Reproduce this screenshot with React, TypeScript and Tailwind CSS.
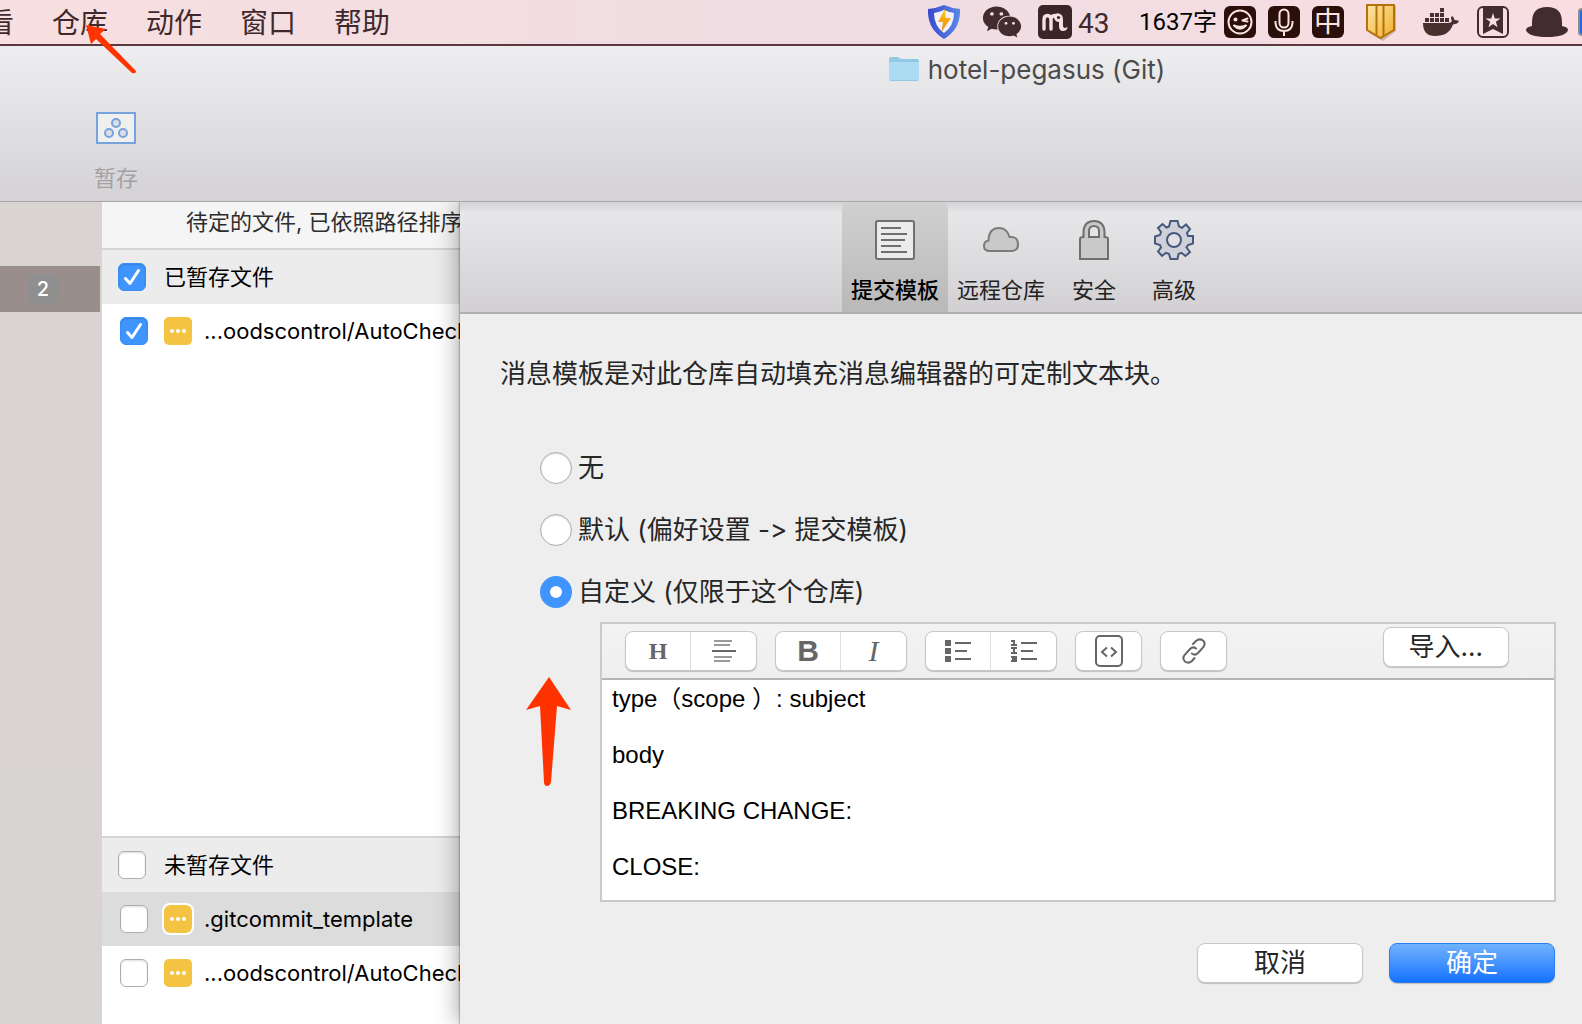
import React, { useId, useState } from "react";
import { FaWeixin } from "react-icons/fa";

const menuItems = ["看", "仓库", "动作", "窗口", "帮助"];

const initialTemplate = "type（scope ）: subject\n\nbody\n\nBREAKING CHANGE:\n\nCLOSE:";

function ShieldIcon() {
  return (
    <svg width="32" height="34" viewBox="0 0 32 34" aria-hidden="true">
      <defs>
        <linearGradient id="shield" x1="0" x2="1">
          <stop offset="0" stopColor="#3a49cf" />
          <stop offset="1" stopColor="#5b8ae4" />
        </linearGradient>
        <linearGradient id="bolt" x1="0" x2="0" y1="0" y2="1">
          <stop offset="0" stopColor="#ffc60a" />
          <stop offset="1" stopColor="#ee8a12" />
        </linearGradient>
      </defs>
      <path d="M0 4Q9 3 16 0Q23 3 32 4Q33 24 16 34Q-1 24 0 4Z" fill="url(#shield)" />
      <path d="M6 8Q12 7 16 5Q20 7 26 8Q26 21 16 28Q6 21 6 8Z" fill="#f5f1fb" />
      <path d="M17 4L10 17H15L13.500 27L23 13H17.500Z" fill="url(#bolt)" />
    </svg>
  );
}

function MIcon() {
  return (
    <svg width="34" height="34" viewBox="0 0 34 34" aria-hidden="true">
      <rect width="34" height="34" rx="5" fill="#3a2628" />
      <path
        d="M6 24V15Q6 10.500 9.500 10.500Q13 10.500 13 15V24M13 15Q13 10.500 17 10.500"
        fill="none"
        stroke="#f6e0e2"
        strokeWidth="3.400"
        strokeLinecap="round"
      />
      <path
        d="M15 11Q18 7 22 9Q25 10 25 15V21Q25 23 27 23Q28.500 23 29 21.500Q30 22 29 24Q28 26 25 26Q21 26 21 21V17Q18 17 17 15Z"
        fill="#f6e0e2"
      />
      <circle cx="20.500" cy="12.500" r="1.600" fill="#3a2628" />
    </svg>
  );
}

function SmileIcon() {
  return (
    <svg width="32" height="32" viewBox="0 0 32 32" aria-hidden="true" fill="none" stroke="#fbe4df" strokeWidth="2">
      <rect width="32" height="32" rx="6" fill="#2a0f0a" stroke="none" />
      <circle cx="16" cy="16" r="11.500" />
      <path d="M23.500 12.500L18.500 14.500L23.500 15.500M10 19.500Q16 26 22 19.500Q16 22 10 19.500Z" strokeLinecap="round" strokeLinejoin="round" />
      <circle cx="11.500" cy="13.500" r="2" fill="#fbe4df" stroke="none" />
    </svg>
  );
}

function MicIcon() {
  return (
    <svg width="32" height="32" viewBox="0 0 32 32" aria-hidden="true" fill="none" stroke="#fbe4df" strokeWidth="2">
      <rect width="32" height="32" rx="6" fill="#2a0f0a" stroke="none" />
      <rect x="11.500" y="3.500" width="9" height="18" rx="4.500" />
      <path d="M7.500 15V17Q8 25 16 25Q24 25 24.500 17V15M16 25V30" />
    </svg>
  );
}

function GoldIcon() {
  return (
    <svg width="32" height="37" viewBox="0 0 32 37" aria-hidden="true">
      <defs>
        <linearGradient id="gold" x1="0" x2="1" y1="0" y2="1">
          <stop offset="0" stopColor="#ffe6a6" />
          <stop offset="1" stopColor="#eeb02c" />
        </linearGradient>
      </defs>
      <path d="M2 2H30V27L17 37L3 29Z" fill="#a9877e" opacity="0.5" />
      <path d="M1 1H28V26L14.500 34L1 26Z" fill="url(#gold)" stroke="#b5720b" strokeWidth="2" />
      <path d="M10.500 1V31M17.500 1V32" stroke="#b5720b" strokeWidth="2" />
    </svg>
  );
}

function DockerIcon() {
  return (
    <svg width="36" height="28" viewBox="0 0 36 28" aria-hidden="true" fill="#49302f">
      <path d="M0 15H25Q28 15 29 13Q27 10 29 8Q31 9 31.500 12Q34 12 36 13Q35 16 30 16.500Q26 28 12 28Q0 28 0 15Z" />
      <path d="M2 10H6V14H2ZM7 10H11V14H7ZM12 10H16V14H12ZM17 10H21V14H17ZM22 10H26V14H22ZM7 5H11V9H7ZM12 5H16V9H12ZM17 5H21V9H17ZM17 0H21V4H17Z" />
    </svg>
  );
}

function BookmarkIcon() {
  return (
    <svg width="32" height="32" viewBox="0 0 32 32" aria-hidden="true">
      <rect x="1" y="1" width="30" height="30" rx="5" fill="none" stroke="#422c31" strokeWidth="2" />
      <path d="M6 1H26V28L16 23L6 28Z" fill="#422c31" />
      <path d="M16 7L17.800 12.400H23.500L18.900 15.800L20.600 21.200L16 17.900L11.400 21.200L13.100 15.800L8.500 12.400H14.200Z" fill="#fbdedf" />
    </svg>
  );
}

function HatIcon() {
  return (
    <svg width="42" height="30" viewBox="0 0 42 30" aria-hidden="true" fill="#422c31">
      <path d="M6 19V15Q6 0 21 0Q36 0 36 15V19Q42 20 42 23Q40 30 21 30Q2 30 0 23Q0 20 6 19Z" />
    </svg>
  );
}

function MenuBar() {
  return (
    <header className="flex h-[46px] shrink-0 items-center justify-between overflow-hidden border-b-2 border-[#5a3a40] bg-linear-to-r from-[#f8dfe0] via-[#eedde3] via-55% to-[#f9dde1] text-[28px] leading-8 text-[#3f292d]">
      <nav className="-ml-3.5 flex shrink-0 gap-[38px] pt-px whitespace-nowrap">
        {menuItems.map((item) => (
          <button key={item} type="button">
            {item}
          </button>
        ))}
      </nav>
      <div className="flex shrink-0 items-center whitespace-nowrap">
        <ShieldIcon />
        <FaWeixin className="ml-[22px]" size={40} color="#432c30" />
        <span className="ml-4">
          <MIcon />
        </span>
        <span className="ml-1.5 w-[61px] pt-1 font-[Roboto]">43</span>
        <span className="w-[85px] font-[Roboto,'Noto_Sans_CJK_SC'] text-2xl text-black">1637字</span>
        <div className="flex gap-3">
          <SmileIcon />
          <MicIcon />
          <span className="flex size-8 items-center justify-center rounded-md bg-[#2a0f0a] text-[28px] text-[#fbe4df]">中</span>
        </div>
        <span className="ml-[22px]">
          <GoldIcon />
        </span>
        <span className="ml-[25px]">
          <DockerIcon />
        </span>
        <span className="ml-[18px]">
          <BookmarkIcon />
        </span>
        <span className="ml-[17px]">
          <HatIcon />
        </span>
        <span className="ml-2.5 h-7 w-1 rounded-l-md border-2 border-r-0 border-[#8d8a94] bg-[#1a6fd8]" />
      </div>
    </header>
  );
}

function WindowToolbar() {
  return (
    <div className="h-[156px] shrink-0 border-b border-[#a9a6aa] bg-linear-to-b from-[#eeedef] to-[#d4d2d5]">
      <div className="flex h-[46px] items-center justify-center gap-2 pl-[470px] text-[#4b4b4b]">
        <svg width="33" height="26" viewBox="0 0 33 26" aria-hidden="true">
          <path d="M2 3Q2 1 4 1H11L14 3H30Q32 3 32 5V23Q32 25 30 25H4Q2 25 2 23Z" fill="#8fc9e2" />
          <path d="M2 6H32V22Q32 24 30 24H4Q2 24 2 22Z" fill="#abdcf3" />
        </svg>
        <h1 className="text-[26px]">hotel-pegasus (Git)</h1>
      </div>
      <button type="button" className="ml-[86px] flex w-[60px] flex-col items-center gap-[18px] pt-5 text-[22px] leading-8 text-[#a3a2a3]">
        <svg width="40" height="32" viewBox="0 0 40 32" aria-hidden="true" fill="none" stroke="#75a3de" strokeWidth="2">
          <rect x="1" y="1" width="38" height="30" fill="#efeff0" />
          <circle cx="20" cy="11" r="4" fill="#dedee2" />
          <circle cx="13" cy="21" r="4" fill="#dedee2" />
          <circle cx="27" cy="21" r="4" fill="#dedee2" />
        </svg>
        暂存
      </button>
    </div>
  );
}

function Checkbox({ checked, children }: { checked: boolean; children: React.ReactNode }) {
  const [on, setOn] = useState(checked);
  return (
    <label className="flex items-center whitespace-nowrap">
      <span className="relative flex size-7 shrink-0">
        <input
          type="checkbox"
          checked={on}
          onChange={() => setOn(!on)}
          className="peer size-7 appearance-none rounded-md border border-[#aeaeae] bg-white shadow-[inset_0_1px_2px_#0002] checked:border-[#3b8ef5] checked:bg-[#3f95fd]"
        />
        <svg viewBox="0 0 28 28" aria-hidden="true" className="pointer-events-none absolute inset-0 hidden peer-checked:block">
          <path d="M7.500 15.500L12 20.500L20.500 7.500" fill="none" stroke="white" strokeWidth="3" strokeLinecap="round" strokeLinejoin="round" />
        </svg>
      </span>
      {children}
    </label>
  );
}

function GroupRow({ title, checked }: { title: string; checked: boolean }) {
  return (
    <div className="flex h-[54px] shrink-0 items-center bg-[#ececec] pl-4">
      <Checkbox checked={checked}>
        <span className="pl-[18px]">{title}</span>
      </Checkbox>
    </div>
  );
}

function FileRow({ name, checked, selected }: { name: string; checked: boolean; selected?: boolean }) {
  return (
    <div className={selected ? "flex h-[54px] items-center bg-[#dcdcdc] pl-[18px]" : "flex h-[54px] items-center pl-[18px]"}>
      <Checkbox checked={checked}>
        <svg
          width="28"
          height="28"
          viewBox="0 0 28 28"
          aria-hidden="true"
          className={selected ? "mr-3 ml-4 rounded-md outline-2 outline-white" : "mr-3 ml-4"}
        >
          <rect width="28" height="28" rx="5" fill="#f5c342" />
          <circle cx="8" cy="14" r="2" fill="white" />
          <circle cx="14" cy="14" r="2" fill="white" />
          <circle cx="20" cy="14" r="2" fill="white" />
        </svg>
        <span>{name}</span>
      </Checkbox>
    </div>
  );
}

function FileList() {
  return (
    <section className="flex w-[358px] shrink-0 flex-col overflow-hidden bg-white text-[22px] leading-7 text-black">
      <h2 className="h-12 shrink-0 border-b-2 border-[#d4d4d4] bg-[#f5f5f5] pt-1.5 pl-[84px] whitespace-nowrap text-[#2d2d2d]">
        待定的文件, 已依照路径排序
      </h2>
      <div className="flex-1">
        <GroupRow title="已暂存文件" checked />
        <FileRow name="...oodscontrol/AutoCheck" checked />
      </div>
      <div className="h-[188px] shrink-0 border-t-2 border-[#d4d4d4]">
        <GroupRow title="未暂存文件" checked={false} />
        <FileRow name=".gitcommit_template" checked={false} selected />
        <FileRow name="...oodscontrol/AutoCheck" checked={false} />
      </div>
    </section>
  );
}

function TemplateTabIcon() {
  return (
    <svg width="40" height="40" viewBox="0 0 40 40" aria-hidden="true" stroke="#6f6f6f" strokeWidth="2">
      <rect x="1" y="1" width="38" height="38" rx="2" fill="#ebebeb" />
      <path d="M6 8H26M6 14H32M6 20H30M6 26H26M6 32H32" />
    </svg>
  );
}

function CloudTabIcon() {
  return (
    <svg width="40" height="40" viewBox="0 0 40 40" aria-hidden="true" fill="#c9c9ca" stroke="#7b7b7b" strokeWidth="2">
      <path d="M9 31Q3 31 3 26Q3 21 7.500 20.500Q8 8 18 8Q26 8 28.500 17Q37 16 37 24.500Q37 31 30 31Z" />
    </svg>
  );
}

function LockTabIcon() {
  return (
    <svg width="40" height="40" viewBox="0 0 40 40" aria-hidden="true" fill="#c9c9ca" stroke="#6f6f6f" strokeWidth="2">
      <path d="M6 39V19Q6 17 9.500 17V12Q10 1 20 1Q30 1 30.500 12V17Q34 17 34 19V39Z" />
      <path d="M15 17V11Q15 6 20 6Q25 6 25 11V17Z" fill="#e5e3e5" />
    </svg>
  );
}

function GearTabIcon() {
  return (
    <svg width="40" height="40" viewBox="0 0 40 40" aria-hidden="true" fill="#d0d0da" stroke="#45597c" strokeWidth="2">
      <path d="M16.500 1H23.500L25 6.500L28 7.800L32 4.500L36 9L33 13L34 16H39V23.500L34 25L32.500 27.500L36 32L31.500 36L27.500 32.800L24.500 34L23.500 39H16.500L15 34L12 32.800L8 36L4 31.500L7 27.500L6 25L1 23.500V16.500L6 15L7 12L4 8L8.500 4L12.500 7.500L15 6.500Z" />
      <circle cx="20" cy="20" r="7" fill="#e2e0e3" />
    </svg>
  );
}

const tabs = [
  { label: "提交模板", icon: <TemplateTabIcon />, selected: true },
  { label: "远程仓库", icon: <CloudTabIcon />, selected: false },
  { label: "安全", icon: <LockTabIcon />, selected: false },
  { label: "高级", icon: <GearTabIcon />, selected: false },
];

function SheetTabs() {
  return (
    <div
      role="tablist"
      className="flex h-28 shrink-0 justify-center border-b-2 border-[#b0aeb0] bg-linear-to-b from-[#d3d1d4] via-[#e7e6e8] via-10% to-[#d2d0d3] pl-3.5 shadow-[0_-1px_0_#85838a]"
    >
      {tabs.map((tab) => (
        <button
          key={tab.label}
          type="button"
          role="tab"
          aria-selected={tab.selected}
          className={
            tab.selected
              ? "flex min-w-20 flex-col items-center gap-3.5 rounded-t-lg bg-linear-to-b from-[#d0d0d0] to-[#b9b9b9] px-[9px] pt-[18px] text-[22px] leading-8 font-medium text-black"
              : "flex min-w-20 flex-col items-center gap-3.5 px-[9px] pt-[18px] text-[22px] leading-8 text-[#222]"
          }
        >
          {tab.icon}
          {tab.label}
        </button>
      ))}
    </div>
  );
}

function Radio({ label, checked, onSelect }: { label: string; checked: boolean; onSelect: () => void }) {
  const id = useId();
  return (
    <div className="flex h-8 items-center gap-1.5">
      <input
        id={id}
        type="radio"
        name="template"
        checked={checked}
        onChange={onSelect}
        className="size-8 appearance-none rounded-full border border-[#adadad] bg-white shadow-[inset_0_1px_2px_#0002] checked:border-10 checked:border-[#3f95fd] checked:shadow-none"
      />
      <label htmlFor={id}>{label}</label>
    </div>
  );
}

function ToolGroup({ children }: { children: React.ReactNode }) {
  return (
    <div className="flex h-10 divide-x divide-[#dedede] rounded-lg border border-[#c8c8c8] bg-white shadow-[0_1px_1px_#0003]">{children}</div>
  );
}

function Tool({ label, children }: { label: string; children: React.ReactNode }) {
  return (
    <button type="button" aria-label={label} className="flex w-[65px] items-center justify-center text-[#666]">
      {children}
    </button>
  );
}

function EditorToolbar() {
  return (
    <div className="flex h-[56px] shrink-0 justify-between border-b-2 border-[#b5b5b5] bg-linear-to-b from-[#f3f3f3] to-[#efefef] pr-[45px] pl-[23px]">
      <div className="flex gap-[18px] pt-[7px]">
        <ToolGroup>
          <Tool label="标题">
            <span className="font-['Liberation_Serif'] text-2xl font-bold">H</span>
          </Tool>
          <Tool label="居中">
            <svg width="24" height="24" viewBox="0 0 24 24" aria-hidden="true" stroke="#999" strokeWidth="2">
              <path d="M2 2H20M2 6H18M2 18H20M2 22H18" />
              <path d="M0 12H24" stroke="#666" />
            </svg>
          </Tool>
        </ToolGroup>
        <ToolGroup>
          <Tool label="粗体">
            <span className="font-['Liberation_Sans'] text-3xl font-bold">B</span>
          </Tool>
          <Tool label="斜体">
            <span className="font-['Liberation_Serif'] text-3xl italic">I</span>
          </Tool>
        </ToolGroup>
        <ToolGroup>
          <Tool label="项目列表">
            <svg width="26" height="24" viewBox="0 0 26 24" aria-hidden="true" fill="#666" stroke="#666" strokeWidth="2">
              <path d="M0 1H6V7H0ZM0 9H6V15H0ZM0 17H6V23H0Z" stroke="none" />
              <path d="M10 4H26M10 12H22M10 20H26" />
            </svg>
          </Tool>
          <Tool label="编号列表">
            <svg width="26" height="24" viewBox="0 0 26 24" aria-hidden="true" fill="none" stroke="#666" strokeWidth="2">
              <path d="M10 4H26M10 12H22M10 20H26" />
              <path d="M0 2H3V5M0 6H6M0 9H6M3 9V15M0 14H6M0 18H5V22M1 20H5M0 22H6" />
            </svg>
          </Tool>
        </ToolGroup>
        <ToolGroup>
          <Tool label="代码">
            <svg width="28" height="32" viewBox="0 0 28 32" aria-hidden="true" fill="none" stroke="#666" strokeWidth="2">
              <rect x="1" y="1" width="26" height="30" rx="4" />
              <path d="M12 12.500L7 17L12 21.500M16 12.500L21 17L16 21.500" />
            </svg>
          </Tool>
        </ToolGroup>
        <ToolGroup>
          <Tool label="链接">
            <svg width="24" height="26" viewBox="0 0 24 26" aria-hidden="true" fill="none" stroke="#666" strokeWidth="2" strokeLinecap="round">
              <path d="M10 15.500Q13 18 16 15L21.500 9Q24 5 21 2.500Q17.500 0 14 3L11 6" />
              <path d="M14 10.500Q11 8 8 11L2.500 17Q0 21 3 23.500Q6.500 26 10 23L12.500 20" />
            </svg>
          </Tool>
        </ToolGroup>
      </div>
      <button
        type="button"
        className="mt-[3px] h-10 rounded-lg border border-[#c8c8c8] bg-white px-[25px] whitespace-nowrap shadow-[0_1px_1px_#0003]"
      >
        导入...
      </button>
    </div>
  );
}

function TemplateSheet() {
  const [choice, setChoice] = useState(2);
  const [template, setTemplate] = useState(initialTemplate);
  const options = ["无", "默认 (偏好设置 -> 提交模板)", "自定义 (仅限于这个仓库)"];
  return (
    <section className="z-10 flex min-w-0 flex-1 flex-col bg-[#eee] text-[26px] leading-8 text-[#262626] shadow-[0_0_2px_#0009,0_0_24px_#0006]">
      <SheetTabs />
      <p className="px-10 pt-11">消息模板是对此仓库自动填充消息编辑器的可定制文本块。</p>
      <div className="flex flex-col gap-[30px] pt-[62px] pl-20">
        {options.map((option, index) => (
          <Radio key={option} label={option} checked={choice === index} onSelect={() => setChoice(index)} />
        ))}
      </div>
      <div className="relative mt-3.5 mr-[26px] ml-[140px] flex flex-col border-2 border-[#cacaca]">
        <svg width="46" height="110" viewBox="0 0 46 110" aria-hidden="true" className="absolute top-[53px] -left-[76px]">
          <path d="M23 0L45 33L31 29L25 105Q24 109 21 109Q18 109 18 105L14 29L0 33Z" fill="#ff3300" />
        </svg>
        <EditorToolbar />
        <textarea
          aria-label="提交模板"
          value={template}
          onChange={(event) => setTemplate(event.target.value)}
          className="h-[220px] resize-none overflow-hidden bg-white px-2.5 pt-[5px] font-['Liberation_Sans','Noto_Sans_CJK_SC',sans-serif] text-2xl leading-7 text-black outline-none"
        />
      </div>
      <div className="flex justify-end gap-[26px] pt-[41px] pr-[27px]">
        <button type="button" className="h-10 w-[166px] rounded-lg border border-[#c8c8c8] bg-white shadow-[0_1px_1px_#0003]">
          取消
        </button>
        <button
          type="button"
          className="h-10 w-[166px] rounded-lg border border-[#2a7df0] bg-linear-to-b from-[#6fb1fb] to-[#0f71ff] text-white shadow-[0_1px_1px_#0003]"
        >
          确定
        </button>
      </div>
    </section>
  );
}

export default function App() {
  return (
    <div className="relative flex min-h-screen flex-col overflow-hidden font-[Inter,'Noto_Sans_CJK_SC',sans-serif] [font-variant-ligatures:none]">
      <MenuBar />
      <WindowToolbar />
      <main className="flex flex-1 overflow-hidden">
        <aside className="w-[102px] shrink-0 bg-linear-to-b from-[#d9d3d2] to-[#d8d4d3] pt-16">
          <div className="mr-0.5 flex h-[46px] items-center bg-[#998e8b] pl-[27px]">
            <span className="flex h-[30px] w-8 items-center justify-center rounded-lg bg-[#8f8f8f] text-xl font-medium text-white">
              2
            </span>
          </div>
        </aside>
        <FileList />
        <TemplateSheet />
      </main>
      <svg width="52" height="50" viewBox="0 0 52 50" aria-hidden="true" className="pointer-events-none absolute top-6 left-[86px]">
        <path d="M0 1L20 5L14 10L50 47Q50 50 46 49L10 15L5 20Z" fill="#ff3300" />
      </svg>
    </div>
  );
}
